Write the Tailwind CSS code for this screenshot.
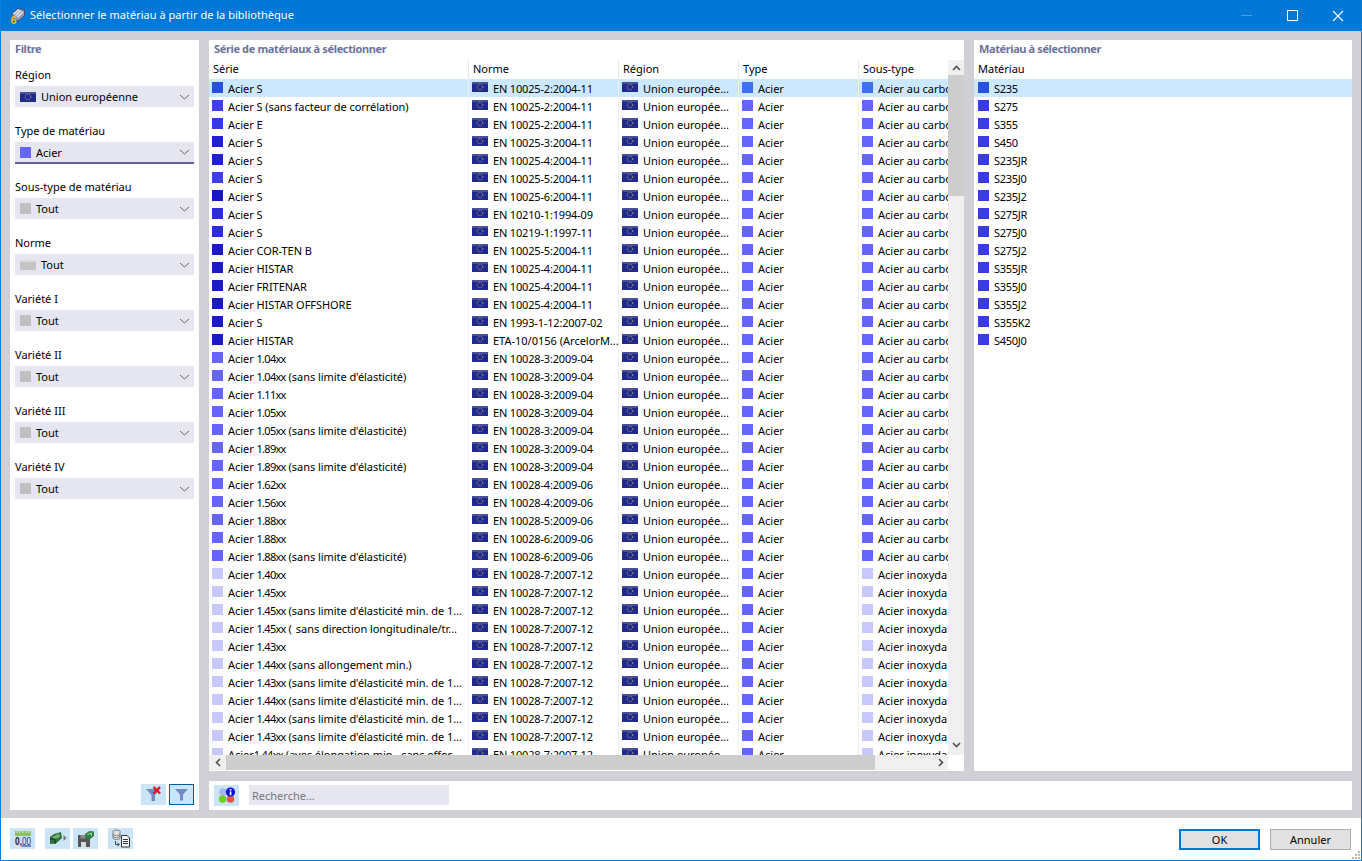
<!DOCTYPE html>
<html lang="fr">
<head>
<meta charset="UTF-8" />
<title>Sélectionner le matériau à partir de la bibliothèque</title>
<script src="https://cdn.jsdelivr.net/npm/@tailwindcss/browser@4"></script>
</head>
<body class="bg-white overflow-hidden">
<div class="w-[1362px] h-[861px] flex flex-col border-x border-b border-[#0e7fd8] bg-white font-['Noto_Sans',sans-serif] text-[11px] text-black whitespace-nowrap overflow-hidden">

    <!-- barre de titre -->
    <div class="h-[31px] shrink-0 bg-[#0078d7] flex items-center text-white -mx-px">
        <svg class="ml-[9px]" width="17" height="17" viewBox="0 0 17 17">
            <path d="M3 7 L9 1.5 L15.5 3 L15.5 8.5 L9.5 14 L4 12 Z" fill="#8f98ad" stroke="#3d4354" stroke-width=".8" />
            <path d="M4.5 7 L10 2.5 M6.5 8.5 L12 3.5 M8.5 10 L14 5" stroke="#eef1f6" stroke-width="1.3" fill="none" />
            <text x="1.5" y="16.5" font-size="11" font-weight="700" fill="#f7b91d" font-family="Liberation Sans">6</text>
        </svg>
        <span class="ml-[4px] text-[11px] tracking-[0.02px]">Sélectionner le matériau à partir de la bibliothèque</span>
        <div class="ml-auto flex items-center">
            <div class="w-[11px] h-px bg-white/30 mr-[35px]"></div>
            <div class="w-[11px] h-[11px] border border-white mr-[34px]"></div>
            <svg class="mr-[18px]" width="12" height="12" viewBox="0 0 12 12"><path d="M1 1 L11 11 M11 1 L1 11" stroke="white" stroke-width="1.1" /></svg>
        </div>
    </div>

    <!-- zone principale -->
    <div class="h-[787px] shrink-0 bg-[#d1d0d6] flex gap-[10px] pl-[9px] pr-[9px] pt-[9px] pb-[8px]">

        <!-- Filtre -->
        <div class="w-[189px] h-[770px] bg-white flex flex-col px-[5px] pb-[5px]">
            <div class="h-[18px] leading-[18px] font-bold text-[#6d7399] tracking-[-0.4px]">Filtre</div>
            <div id="filters" class="mt-[8px]"></div>
            <div class="mt-auto flex justify-end gap-[3px]">
                <div class="w-[25px] h-[21px] bg-[#cce4f7] flex items-center justify-center">
                    <svg width="20" height="18" viewBox="0 0 20 18">
                        <path d="M2 3 H16 L11 9 V15 H7.5 V9 Z" fill="#6d8cc6" />
                        <path d="M9.5 1 L16 7.5 M16 1 L9.5 7.5" stroke="#e8101c" stroke-width="2.4" />
                    </svg>
                </div>
                <div class="w-[25px] h-[21px] bg-[#cce4f7] border border-[#005a9e] flex items-center justify-center">
                    <svg width="15" height="13" viewBox="0 0 15 13">
                        <path d="M1 1 H14 L9 6.5 V12.5 H6 V6.5 Z" fill="#6d8cc6" />
                    </svg>
                </div>
            </div>
        </div>

        <!-- colonne de droite -->
        <div class="w-[1143px] flex flex-col gap-[10px]">
            <div class="h-[731px] flex gap-[10px]">

                <!-- Série -->
                <div class="w-[755px] bg-white flex flex-col">
                    <div class="h-[20px] shrink-0 leading-[18px] font-bold text-[#6d7399] pl-[5px] tracking-[-0.36px]">Série de matériaux à sélectionner</div>
                    <div class="flex h-[695px]">
                        <div class="w-[739px] flex flex-col overflow-hidden">
                            <div class="flex h-[19px] shrink-0 items-center">
                                <div class="w-[260px] h-full pl-[4px] leading-[18px] border-r border-[#e8e8e8]">Série</div>
                                <div class="w-[150px] h-full pl-[4px] leading-[18px] border-r border-[#e8e8e8]">Norme</div>
                                <div class="w-[120px] h-full pl-[4px] leading-[18px] border-r border-[#e8e8e8]">Région</div>
                                <div class="w-[120px] h-full pl-[4px] leading-[18px] border-r border-[#e8e8e8]">Type</div>
                                <div class="w-[89px] h-full pl-[4px] leading-[18px]">Sous-type</div>
                            </div>
                            <div id="rows" class="h-[676px] overflow-hidden"></div>
                        </div>
                        <!-- ascenseur vertical -->
                        <div class="w-[16px] bg-[#f0f0f0] flex flex-col">
                            <div class="h-[15px] flex items-center justify-center">
                                <svg width="9" height="6" viewBox="0 0 9 6"><path d="M1 5 L4.5 1.5 L8 5" stroke="#505050" stroke-width="1.6" fill="none" /></svg>
                            </div>
                            <div class="h-[121px] bg-[#cdcdcd]"></div>
                            <div class="mt-auto h-[20px] flex items-center justify-center">
                                <svg width="9" height="6" viewBox="0 0 9 6"><path d="M1 1 L4.5 4.5 L8 1" stroke="#505050" stroke-width="1.6" fill="none" /></svg>
                            </div>
                        </div>
                    </div>
                    <!-- ascenseur horizontal -->
                    <div class="flex h-[15px]">
                        <div class="w-[739px] bg-[#f0f0f0] flex items-center">
                            <div class="w-[17px] flex justify-center">
                                <svg width="6" height="9" viewBox="0 0 6 9"><path d="M5 1 L1.5 4.5 L5 8" stroke="#505050" stroke-width="1.6" fill="none" /></svg>
                            </div>
                            <div class="w-[649px] h-full bg-[#cdcdcd]"></div>
                            <div class="ml-auto mr-[4px]">
                                <svg width="6" height="9" viewBox="0 0 6 9"><path d="M1 1 L4.5 4.5 L1 8" stroke="#505050" stroke-width="1.6" fill="none" /></svg>
                            </div>
                        </div>
                    </div>
                </div>

                <!-- Matériau -->
                <div class="w-[378px] bg-white flex flex-col">
                    <div class="h-[20px] shrink-0 leading-[18px] font-bold text-[#6d7399] pl-[5px] tracking-[-0.39px]">Matériau à sélectionner</div>
                    <div class="h-[19px] leading-[18px] pl-[4px]">Matériau</div>
                    <div id="materials"></div>
                </div>
            </div>

            <!-- recherche -->
            <div class="h-[29px] bg-white flex items-center pl-[5px] pb-px">
                <div class="w-[25px] h-[21px] bg-[#cce4f7] flex items-center justify-center">
                    <svg width="18" height="17" viewBox="0 0 18 17">
                        <circle cx="5" cy="5" r="3.8" fill="#a4b6ee" />
                        <circle cx="4.6" cy="12" r="3.8" fill="#6fcf1f" />
                        <circle cx="12.5" cy="12" r="3.8" fill="#e25555" />
                        <circle cx="12.5" cy="5" r="4.6" fill="#0a0ae0" />
                        <rect x="11.7" y="2" width="1.7" height="1.6" fill="white" />
                        <rect x="11.7" y="4.4" width="1.7" height="3.8" fill="white" />
                    </svg>
                </div>
                <div class="ml-[10px] w-[200px] h-[20px] bg-[#e6e6f0] text-[#777] leading-[22px] pl-[3px]">Recherche...</div>
            </div>
        </div>
    </div>

    <!-- pied -->
    <div class="flex-1 flex items-start pt-[10px] pl-[9px] pr-[10px] relative">
        <div class="w-[25px] h-[21px] bg-[#cce4f7] flex items-center justify-center">
            <svg width="18" height="18" viewBox="0 0 18 18">
                <rect x="1" y="1" width="16" height="5" fill="#8fc163" />
                <path d="M3 1 V3 M6 1 V3 M9 1 V3 M12 1 V3 M15 1 V3" stroke="#cfe6b8" />
                <text x="1" y="14.5" font-size="11" font-weight="700" fill="#222" font-family="Liberation Sans" textLength="7" lengthAdjust="spacingAndGlyphs">0,</text>
                <text x="8" y="14.5" font-size="11" fill="#1a2a80" font-family="Liberation Sans" textLength="9" lengthAdjust="spacingAndGlyphs">00</text>
                <path d="M8 16 H17" stroke="#1a2a80" />
            </svg>
        </div>
        <div class="ml-[10px] w-[25px] h-[21px] bg-[#cce4f7] flex items-center justify-center">
            <svg width="18" height="15" viewBox="0 0 18 15">
                <path d="M1 6 L5 3 L12 1 L13 7 L7 12.5 L1 13 Z" fill="#2f6f3a" />
                <path d="M3 6 L10 2.5 L11 6 L5 8.5 Z" fill="#6fb36a" />
                <path d="M1 8 H6 V13" stroke="#1c2b20" fill="none" />
                <path d="M14.5 4 L17.5 7 L14.5 10 Z" fill="#777" />
            </svg>
        </div>
        <div class="ml-[3px] w-[25px] h-[21px] bg-[#cce4f7] flex items-center justify-center">
            <svg width="18" height="18" viewBox="0 0 18 18">
                <path d="M1 5 H11 L13 7 V17 H1 Z" fill="#555" />
                <rect x="3.5" y="5" width="5" height="3.5" fill="#8a8a8a" />
                <rect x="4" y="12" width="5" height="5" fill="#d8d8d8" />
                <path d="M8 4 L12.5 1 L17 1.5 L17 6 L12.5 9.5 L8 8 Z" fill="#2f7f45" />
                <path d="M10.5 4.5 L14.5 3 V6" stroke="#a9e0b0" fill="none" />
            </svg>
        </div>
        <div class="ml-[10px] w-[25px] h-[21px] bg-[#cce4f7] flex items-center justify-center">
            <svg width="20" height="19" viewBox="0 0 20 19">
                <ellipse cx="5.5" cy="2.5" rx="3.5" ry="1.5" fill="#d8d8d8" stroke="#666" stroke-width=".8" />
                <path d="M2 2.5 V9 C2 11 9 11 9 9 V2.5 M2 5 C2 7 9 7 9 5 M2 7 C2 9 9 9 9 7" stroke="#666" fill="#e4e4e4" stroke-width=".8" />
                <path d="M4.5 12 V15.5 H8 M6.5 14 L8.5 15.5 L6.5 17" stroke="#444" fill="none" />
                <path d="M10.5 6.5 H16 L18.5 9 V18 H10.5 Z" fill="#f4f8fb" stroke="#333" />
                <path d="M12 10.5 H17 M12 12.5 H17 M12 14.5 H17" stroke="#333" />
            </svg>
        </div>
        <div class="ml-auto flex gap-[10px] mt-px">
            <div class="w-[81px] h-[21px] bg-[#e1e1e1] border-2 border-[#0078d7] text-center leading-[17px]">OK</div>
            <div class="w-[81px] h-[21px] bg-[#e1e1e1] border border-[#adadad] text-center leading-[19px]">Annuler</div>
        </div>
        <svg class="absolute right-0 bottom-0" width="11" height="11" viewBox="0 0 11 11" fill="#b8b8b8">
            <rect x="8" y="2" width="2" height="2" /><rect x="5" y="5" width="2" height="2" /><rect x="8" y="5" width="2" height="2" />
            <rect x="2" y="8" width="2" height="2" /><rect x="5" y="8" width="2" height="2" /><rect x="8" y="8" width="2" height="2" />
        </svg>
    </div>
</div>

<script>
    const flagSvg = (cls) => `<svg class="shrink-0 ${cls}" width="16" height="10" viewBox="0 0 16 10"><rect width="16" height="10" fill="#1f2a8c" /><rect width="16" height="2" fill="#47509e" /><circle cx="8" cy="5" r="2.8" fill="none" stroke="#c9b455" stroke-width=".9" stroke-dasharray="1 1" /></svg>`;
    const greyFlag = `<svg class="shrink-0" width="16" height="10" viewBox="0 0 16 10"><rect width="16" height="10" fill="#c4c4c4" /><rect width="16" height="2" fill="#dcdcdc" /></svg>`;
    const swatch = (color, cls = "") => `<span class="shrink-0 w-[11px] h-[11px] ${cls}" style="background:${color}"></span>`;
    const chevron = `<svg class="ml-auto mr-[4px]" width="11" height="6" viewBox="0 0 11 6"><path d="M1 1 L5.5 5 L10 1" stroke="#666" fill="none" /></svg>`;

    // Filtres de gauche
    const filters = [
        ["Région", flagSvg(""), "Union européenne"],
        ["Type de matériau", swatch("#6666ff"), "Acier"],
        ["Sous-type de matériau", swatch("#c0c0c0"), "Tout"],
        ["Norme", greyFlag, "Tout"],
        ["Variété I", swatch("#c0c0c0"), "Tout"],
        ["Variété II", swatch("#c0c0c0"), "Tout"],
        ["Variété III", swatch("#c0c0c0"), "Tout"],
        ["Variété IV", swatch("#c0c0c0"), "Tout"],
    ];
    document.getElementById("filters").innerHTML = filters.map(([label, icon, value], i) => `
        <div class="h-[56px]">
            <div class="h-[20px] leading-[18px]">${label}</div>
            <div class="${i === 1 ? "h-[22px] border-b-2 border-[#6060a0]" : "h-[21px]"} bg-[#e6e6f0] flex items-center pl-[5px] gap-[5px]">
                ${icon}<span class="mt-[2px]">${value}</span>${chevron}
            </div>
        </div>`).join("");

    // Série, norme, couleur
    const A = "Union europée...";
    const noLimit = " (sans limite d'élasticité)";
    const noMin = " (sans limite d'élasticité min. de 1...";
    const series = [
        ["Acier S", "EN 10025-2:2004-11", "#2850e0"],
        ["Acier S (sans facteur de corrélation)", "EN 10025-2:2004-11", "#4040e6"],
        ["Acier E", "EN 10025-2:2004-11", "#3636ea"],
        ["Acier S", "EN 10025-3:2004-11", "#2020d0"],
        ["Acier S", "EN 10025-4:2004-11", "#2020d0"],
        ["Acier S", "EN 10025-5:2004-11", "#4040e0"],
        ["Acier S", "EN 10025-6:2004-11", "#1818c0"],
        ["Acier S", "EN 10210-1:1994-09", "#2c2cd8"],
        ["Acier S", "EN 10219-1:1997-11", "#2c2cd8"],
        ["Acier COR-TEN B", "EN 10025-5:2004-11", "#1a1ac0"],
        ["Acier HISTAR", "EN 10025-4:2004-11", "#1a1ac0"],
        ["Acier FRITENAR", "EN 10025-4:2004-11", "#1a1ac0"],
        ["Acier HISTAR OFFSHORE", "EN 10025-4:2004-11", "#1a1ac0"],
        ["Acier S", "EN 1993-1-12:2007-02", "#1a1ac0"],
        ["Acier HISTAR", "ETA-10/0156 (ArcelorM...", "#1a1ac0"],
        ["Acier 1.04xx", "EN 10028-3:2009-04", "#6666ff"],
        ["Acier 1.04xx" + noLimit, "EN 10028-3:2009-04", "#6666ff"],
        ["Acier 1.11xx", "EN 10028-3:2009-04", "#6666ff"],
        ["Acier 1.05xx", "EN 10028-3:2009-04", "#6666ff"],
        ["Acier 1.05xx" + noLimit, "EN 10028-3:2009-04", "#6666ff"],
        ["Acier 1.89xx", "EN 10028-3:2009-04", "#6666ff"],
        ["Acier 1.89xx" + noLimit, "EN 10028-3:2009-04", "#6666ff"],
        ["Acier 1.62xx", "EN 10028-4:2009-06", "#6666ff"],
        ["Acier 1.56xx", "EN 10028-4:2009-06", "#6666ff"],
        ["Acier 1.88xx", "EN 10028-5:2009-06", "#6666ff"],
        ["Acier 1.88xx", "EN 10028-6:2009-06", "#6666ff"],
        ["Acier 1.88xx" + noLimit, "EN 10028-6:2009-06", "#6666ff"],
        ["Acier 1.40xx", "EN 10028-7:2007-12", "#c8c8ff"],
        ["Acier 1.45xx", "EN 10028-7:2007-12", "#c8c8ff"],
        ["Acier 1.45xx" + noMin, "EN 10028-7:2007-12", "#c8c8ff"],
        ["Acier 1.45xx ( sans direction longitudinale/tr...", "EN 10028-7:2007-12", "#c8c8ff"],
        ["Acier 1.43xx", "EN 10028-7:2007-12", "#c8c8ff"],
        ["Acier 1.44xx (sans allongement min.)", "EN 10028-7:2007-12", "#c8c8ff"],
        ["Acier 1.43xx" + noMin, "EN 10028-7:2007-12", "#c8c8ff"],
        ["Acier 1.44xx" + noMin, "EN 10028-7:2007-12", "#c8c8ff"],
        ["Acier 1.44xx" + noMin, "EN 10028-7:2007-12", "#c8c8ff"],
        ["Acier 1.43xx" + noMin, "EN 10028-7:2007-12", "#c8c8ff"],
        ["Acier1.44xx (avec élongation min., sans effor...", "EN 10028-7:2007-12", "#c8c8ff"],
    ];

    // les nuances "1.04xx" sont plus serrées dans la référence
    const formatName = (name) => name
        .replace(/\d\.\d\dxx/, (m) => `<span class="tracking-[-0.7px]">${m}</span>`)
        .replace("( sans", `(<span class="ml-[4px]">sans</span>`);

    document.getElementById("rows").innerHTML = series.map(([name, norm, color], i) => {
        const selected = i === 0;
        const inox = i >= 27;
        const type = selected ? "#4070f0" : "#6666ff";
        const sub = inox ? "#c8c8ff" : type;
        return `
        <div class="flex h-[18px] items-center ${selected ? "bg-[#cce8ff]" : ""}">
            <div class="w-[260px] h-full flex items-center pl-[3px] gap-[5px] border-r border-[#f0f0f0]">${swatch(color, "-mt-px")}<span class="mt-[2px] tracking-[-0.05px]">${formatName(name)}</span></div>
            <div class="w-[150px] h-full flex items-center pl-[3px] gap-[5px] border-r border-[#f0f0f0]">${flagSvg("-mt-[2px]")}<span class="mt-[2px] ${i === 14 ? "" : "tracking-[-0.17px]"}">${norm}</span></div>
            <div class="w-[120px] h-full flex items-center pl-[3px] gap-[5px] border-r border-[#f0f0f0]">${flagSvg("-mt-[2px]")}<span class="mt-[2px]">${A}</span></div>
            <div class="w-[120px] h-full flex items-center pl-[3px] gap-[5px] border-r border-[#f0f0f0]">${swatch(type, "-mt-px")}<span class="mt-[2px]">Acier</span></div>
            <div class="w-[89px] h-full flex items-center pl-[3px] gap-[5px] overflow-hidden">${swatch(sub, "-mt-px")}<span class="mt-[2px]">${inox ? "Acier inoxydable" : "Acier au carbone"}</span></div>
        </div>`;
    }).join("");

    // Liste des matériaux
    const materials = ["S235", "S275", "S355", "S450", "S235JR", "S235J0", "S235J2", "S275JR", "S275J0", "S275J2", "S355JR", "S355J0", "S355J2", "S355K2", "S450J0"];
    document.getElementById("materials").innerHTML = materials.map((name, i) => `
        <div class="h-[18px] flex items-center pl-[4px] gap-[5px] ${i === 0 ? "bg-[#cce8ff]" : ""}">${swatch(i === 0 ? "#2850e0" : "#3a3ae6", "-mt-px")}<span class="mt-[2px] tracking-[-0.3px]">${name}</span></div>`).join("");
</script>
</body>
</html>
